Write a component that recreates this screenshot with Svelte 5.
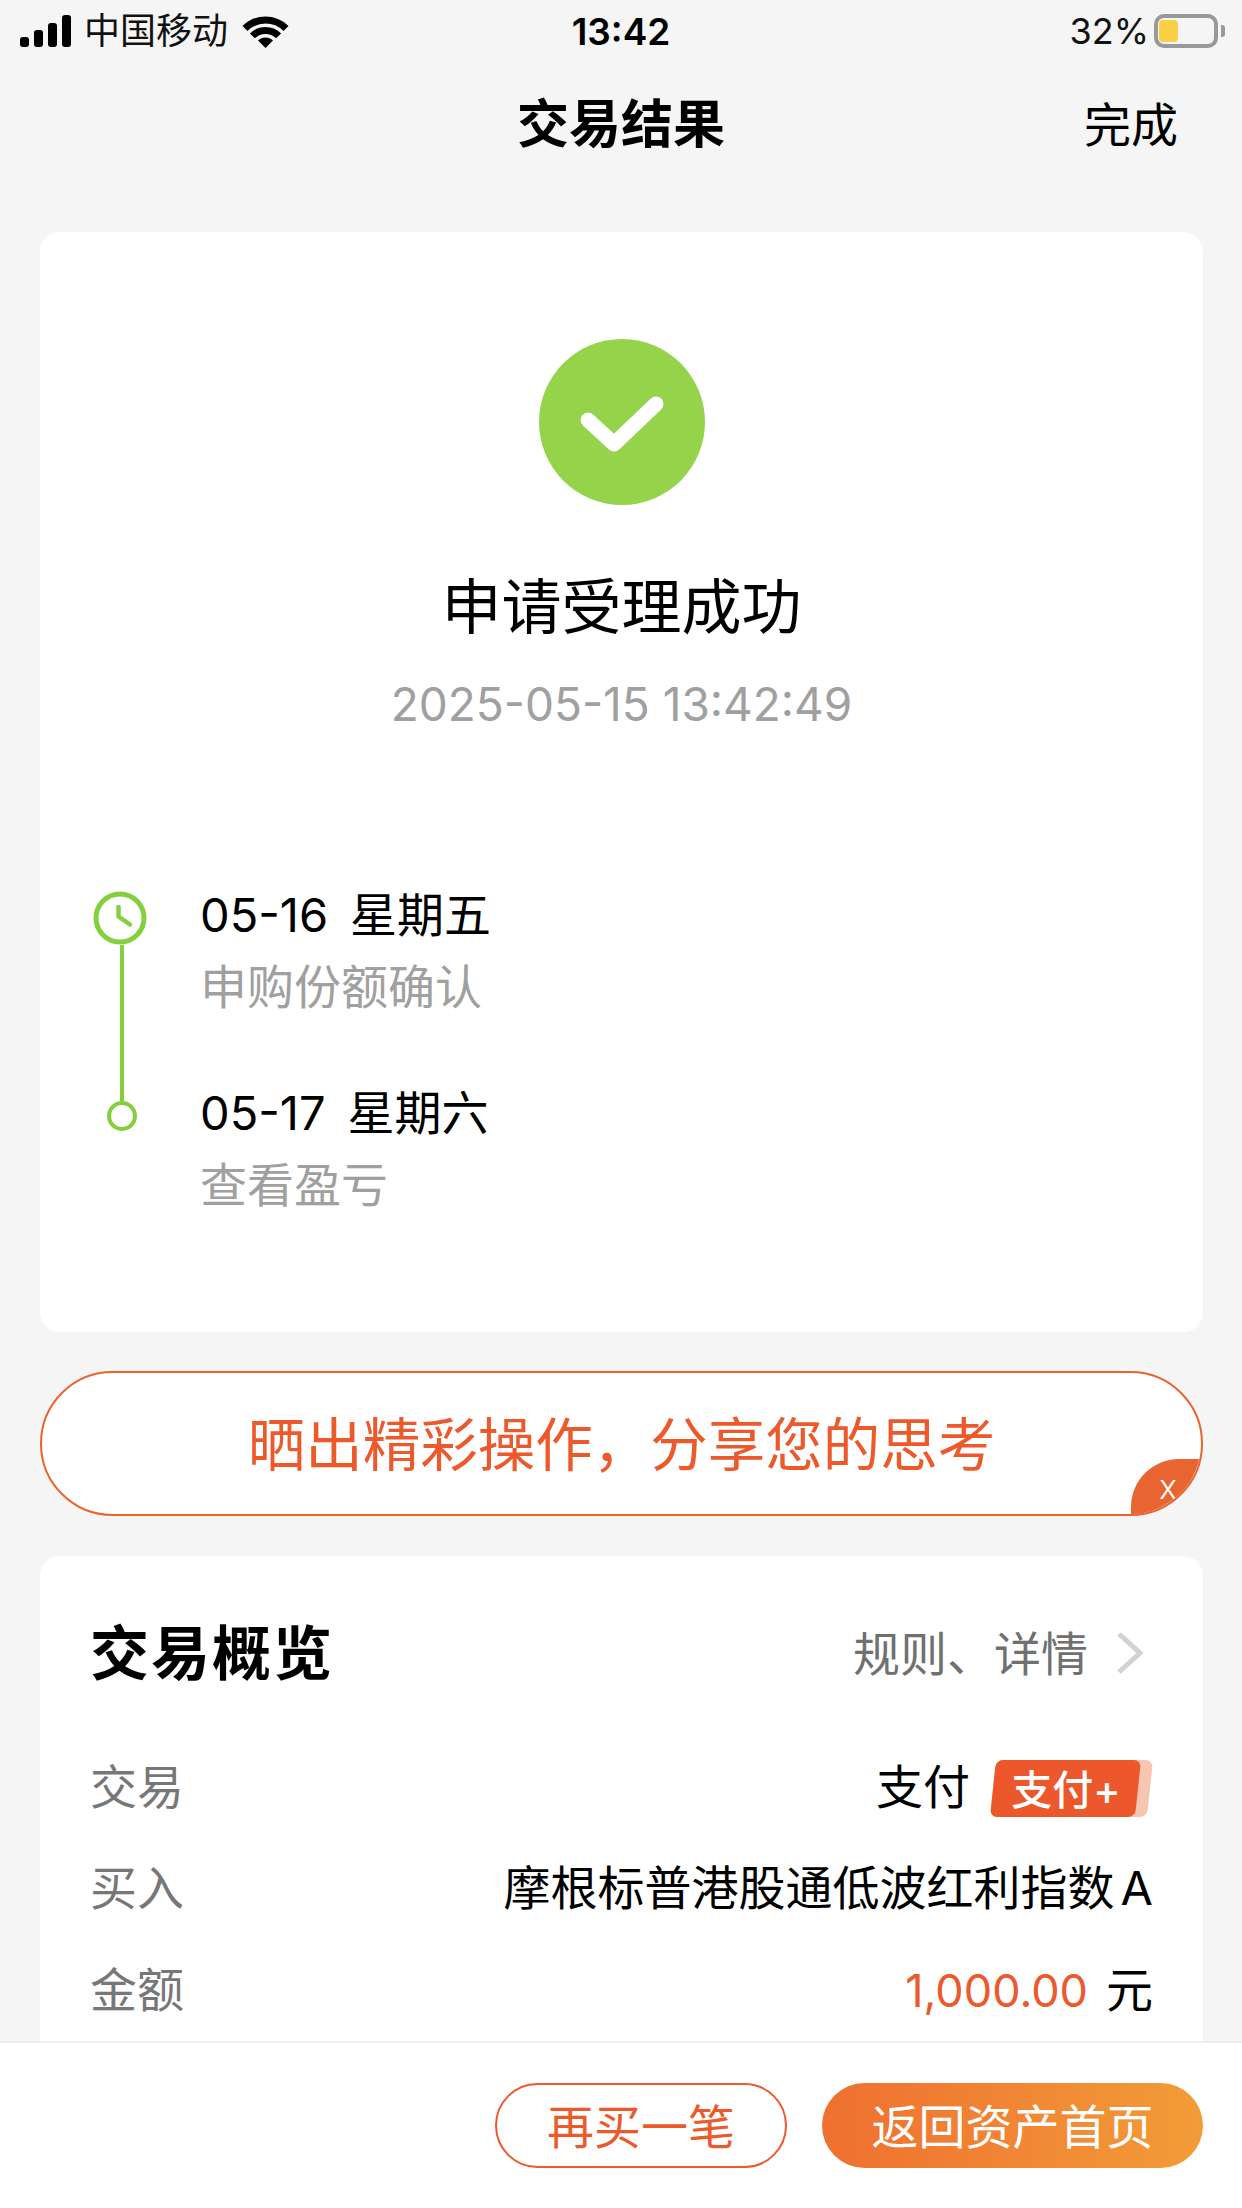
<script>
  const steps = [
    { date: '05-16', day: '星期五', label: '申购份额确认' },
    { date: '05-17', day: '星期六', label: '查看盈亏' },
  ];
</script>

<div class="page">
  <div class="status">
    <div class="status-left">
      <div class="signal">
        <i style="height: 10px"></i>
        <i style="height: 17px"></i>
        <i style="height: 24px"></i>
        <i style="height: 32px"></i>
      </div>
      <span class="carrier">中国移动</span>
      <svg class="wifi" width="47" height="33" viewBox="0 0 47 33" fill="none">
        <path d="M3 13.5A29 29 0 0 1 44 13.5" stroke="#000" stroke-width="7" />
        <path d="M10.4 20.9A18.5 18.5 0 0 1 36.6 20.9" stroke="#000" stroke-width="7" />
        <path d="M23.5 33L16 25.5A10.6 10.6 0 0 1 31 25.5Z" fill="#000" />
      </svg>
    </div>
    <span class="time">13:42</span>
    <div class="status-right">
      <span class="percent">32%</span>
      <div class="battery"><div class="level"></div></div>
      <div class="nub"></div>
    </div>
  </div>

  <div class="nav">
    <span class="nav-title">交易结果</span>
    <span class="nav-done">完成</span>
  </div>

  <div class="content">
    <div class="card result">
      <svg class="ok" width="166" height="166" viewBox="0 0 166 166">
        <circle cx="83" cy="83" r="83" fill="#95d34a" />
        <path d="M49 81L75 105L117 65" fill="none" stroke="#fff" stroke-width="15" stroke-linecap="round" stroke-linejoin="round" />
      </svg>
      <div class="result-title">申请受理成功</div>
      <div class="result-time">2025-05-15 13:42:49</div>

      <div class="timeline">
        <div class="rail">
          <svg class="clock" width="54" height="54" viewBox="0 0 54 54" fill="none" stroke="#84cf3e">
            <circle cx="27" cy="27" r="24" stroke-width="5" />
            <path d="M25.5 16V25.5L37 33.5" stroke-width="4.5" stroke-linecap="round" stroke-linejoin="round" />
          </svg>
          <div class="line"></div>
          <div class="dot"></div>
        </div>
        <div class="steps">
          {#each steps as step}
            <div class="step">
              <div class="step-date">{step.date}<span class="step-day">{step.day}</span></div>
              <div class="step-label">{step.label}</div>
            </div>
          {/each}
        </div>
      </div>
    </div>

    <div class="banner">
      <span>晒出精彩操作，分享您的思考</span>
      <div class="banner-close">x</div>
    </div>

    <div class="card overview">
      <div class="overview-head">
        <span class="overview-title">交易概览</span>
        <span class="overview-link">
          <span class="link-text">规则、详情</span>
          <svg width="28" height="44" viewBox="0 0 28 44" fill="none">
            <path d="M3 3L24 22L3 41" stroke="#d2d2d2" stroke-width="5" />
          </svg>
        </span>
      </div>
      <div class="row">
        <span class="row-key">交易</span>
        <span class="row-value">
          <span class="row-text">支付</span>
          <span class="badge"><span class="badge-main"><span>支付+</span></span></span>
        </span>
      </div>
      <div class="row">
        <span class="row-key">买入</span>
        <span class="row-value"><span class="row-text">摩根标普港股通低波红利指数<span class="fund-class">A</span></span></span>
      </div>
      <div class="row">
        <span class="row-key">金额</span>
        <span class="row-value"><span class="row-text"><span class="amount">1,000.00</span>元</span></span>
      </div>
    </div>
  </div>

  <div class="footer">
    <button class="btn outline" type="button">再买一笔</button>
    <button class="btn solid" type="button">返回资产首页</button>
  </div>
</div>

<style>
  :global(body) {
    margin: 0;
    background: #f5f5f5;
  }

  .page {
    width: 1242px;
    height: 2208px;
    display: flex;
    flex-direction: column;
    overflow: hidden;
    background: #f5f5f5;
    color: #000;
    font-family: Inter, "Noto Sans CJK SC", sans-serif;
    font-size: 47px;
  }

  .status {
    height: 62px;
    flex: none;
    position: relative;
    display: flex;
    align-items: center;
    justify-content: space-between;
    padding: 0 17px 0 20px;
  }

  .status-left,
  .status-right {
    display: flex;
    align-items: center;
  }

  .signal {
    display: flex;
    align-items: flex-end;
    gap: 5px;
    height: 32px;
  }

  .signal i {
    display: block;
    width: 9px;
    border-radius: 3px;
    background: #000;
  }

  .carrier {
    font-size: 36px;
    line-height: 62px;
    margin-left: 13px;
    color: #111;
  }

  .wifi {
    margin-left: 14px;
  }

  .time {
    position: absolute;
    left: 0;
    right: 0;
    text-align: center;
    font-size: 37px;
    font-weight: 600;
  }

  .percent {
    font-size: 36px;
    margin-right: 5px;
    color: #111;
  }

  .battery {
    width: 64px;
    height: 34px;
    box-sizing: border-box;
    border: 4px solid #999;
    border-radius: 10px;
    padding: 2px 1px;
    background: #f5f5f5;
  }

  .level {
    width: 19px;
    height: 100%;
    border-radius: 4px;
    background: #f9d045;
  }

  .nub {
    width: 4px;
    height: 12px;
    margin-left: 3px;
    border-radius: 0 3px 3px 0;
    background: #999;
  }

  .nav {
    height: 124px;
    flex: none;
    box-sizing: border-box;
    padding-bottom: 8px;
    position: relative;
    display: flex;
    align-items: center;
    justify-content: center;
  }

  .nav-title {
    font-size: 52px;
    font-weight: 700;
  }

  .nav-done {
    position: absolute;
    right: 64px;
    top: 50%;
    transform: translateY(-54%);
    font-size: 47px;
  }

  .content {
    flex: 1;
    min-height: 0;
    overflow: hidden;
    padding: 46px 39px 0 40px;
  }

  .card {
    background: #fff;
    border-radius: 20px;
  }

  .result {
    height: 1100px;
    box-sizing: border-box;
    padding-top: 107px;
    display: flex;
    flex-direction: column;
    align-items: center;
  }

  .ok {
    flex: none;
  }

  .result-title {
    margin-top: 62px;
    font-size: 60px;
    line-height: 80px;
  }

  .result-time {
    margin-top: 27px;
    font-size: 46px;
    line-height: 60px;
    color: #a0a0a0;
  }

  .timeline {
    align-self: stretch;
    margin-top: 146px;
    padding-left: 53px;
    display: flex;
  }

  .rail {
    width: 58px;
    height: 240px;
    margin-top: 11px;
    display: flex;
    flex-direction: column;
    align-items: center;
  }

  .clock {
    flex: none;
    align-self: flex-start;
  }

  .line {
    flex: 1;
    width: 4px;
    background: #84cf3e;
  }

  .dot {
    width: 30px;
    height: 30px;
    flex: none;
    box-sizing: border-box;
    border: 4px solid #84cf3e;
    border-radius: 50%;
  }

  .steps {
    margin-left: 49px;
    display: flex;
    flex-direction: column;
    gap: 56px;
  }

  .step-date {
    line-height: 70px;
  }

  .step-day {
    margin-left: 22px;
  }

  .step-label {
    line-height: 70px;
    margin-top: 2px;
    color: #a0a0a0;
  }

  .banner {
    height: 145px;
    margin-top: 39px;
    box-sizing: border-box;
    padding-bottom: 6px;
    position: relative;
    overflow: hidden;
    display: flex;
    align-items: center;
    justify-content: center;
    border: 2px solid #e9642f;
    border-radius: 73px;
    background: #fff;
    color: #ec5a2c;
    font-size: 57.5px;
  }

  .banner-close {
    position: absolute;
    right: 0;
    bottom: 0;
    width: 70px;
    height: 55px;
    box-sizing: border-box;
    padding: 6px 0 0 4px;
    border-top-left-radius: 48px;
    background: #e86430;
    color: #fff;
    font-size: 34px;
    font-weight: 300;
    line-height: 44px;
    text-align: center;
  }

  .overview {
    margin-top: 40px;
    padding: 57px 50px 60px 50px;
  }

  .overview-head {
    height: 80px;
    margin-bottom: 42px;
    display: flex;
    align-items: center;
    justify-content: space-between;
  }

  .overview-title {
    padding-bottom: 8px;
    font-size: 59px;
    font-weight: 700;
    letter-spacing: 2px;
  }

  .overview-link {
    display: flex;
    align-items: center;
    gap: 28px;
    margin-right: 9px;
    color: #707070;
  }

  .link-text {
    padding-bottom: 5px;
  }

  .row {
    height: 101.5px;
    display: flex;
    align-items: center;
    justify-content: space-between;
  }

  .row-key {
    padding-bottom: 5px;
    color: #777;
  }

  .row-value {
    display: flex;
    align-items: center;
  }

  .row-text {
    padding-bottom: 5px;
  }

  .fund-class {
    margin-left: 6px;
  }

  .badge {
    width: 157px;
    height: 57px;
    margin: 6px 3px 0 23px;
    display: flex;
    transform: skewX(-6deg);
    border-radius: 7px;
    background: #f6c6b3;
  }

  .badge-main {
    width: 145px;
    box-sizing: border-box;
    padding-bottom: 4px;
    display: flex;
    align-items: center;
    justify-content: center;
    border-radius: 7px;
    background: #ec572b;
    color: #fff;
    font-size: 41px;
    font-weight: 500;
  }

  .badge-main span {
    transform: skewX(6deg);
  }

  .amount {
    margin-right: 18px;
    font-size: 45px;
    color: #ec5a2c;
  }

  .footer {
    height: 167px;
    flex: none;
    box-sizing: border-box;
    border-top: 2px solid #eee;
    padding: 40px 39px 0 0;
    display: flex;
    justify-content: flex-end;
    gap: 35px;
    background: #fff;
  }

  .btn {
    height: 85px;
    box-sizing: border-box;
    padding: 0 0 5px;
    border-radius: 43px;
    font: inherit;
  }

  .outline {
    width: 292px;
    border: 2px solid #ec5a2c;
    background: #fff;
    color: #ec5a2c;
  }

  .solid {
    width: 381px;
    border: none;
    background: linear-gradient(90deg, #ef7030, #f29c38);
    color: #fff;
  }
</style>
